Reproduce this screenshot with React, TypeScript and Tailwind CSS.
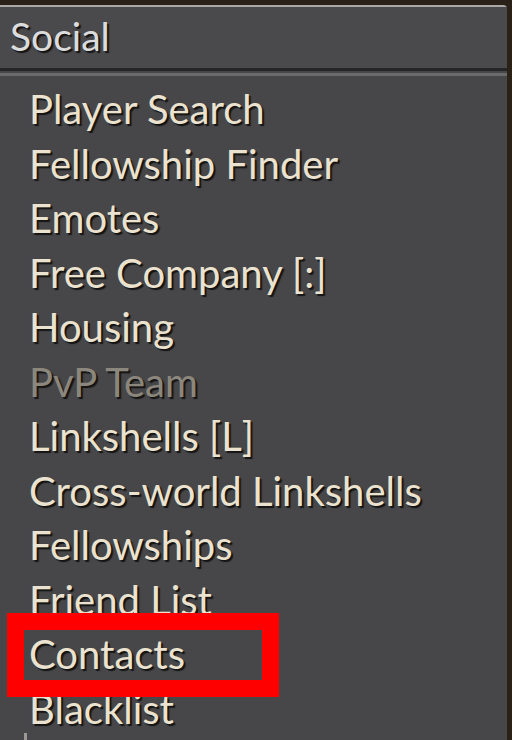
const items: { label: string; disabled?: boolean }[] = [
  { label: "Player Search" },
  { label: "Fellowship Finder" },
  { label: "Emotes" },
  { label: "Free Company [:]" },
  { label: "Housing" },
  { label: "PvP Team", disabled: true },
  { label: "Linkshells [L]" },
  { label: "Cross-world Linkshells" },
  { label: "Fellowships" },
  { label: "Friend List" },
  { label: "Contacts" },
  { label: "Blacklist" },
];

export default function App() {
  return (
    <div className="w-[512px] h-[740px] overflow-hidden bg-[#2a2219] pt-[5px] pr-[5px] font-['Lato','Noto_Sans',sans-serif]">
      <div className="relative h-full rounded-tr-[4px] border-t-2 border-[#a9a8a6] bg-[#474648]">
        {/* header */}
        <div className="h-[61px] bg-[#4a494b] pl-[10px] text-[39px] leading-[59px] text-[#dcdcdc] [text-shadow:2px_2px_1px_#151515]">
          Social
        </div>
        <div className="h-[3px] bg-[#252426]" />
        <div className="h-[2px] bg-[#474648]" />
        <div className="h-[3px] bg-[#6b6a6b]" />

        {/* menu list */}
        <div className="pt-[6px] pl-[29px]">
          {items.map((item) => (
            <div
              key={item.label}
              className={
                "h-[54.5px] text-[40px] leading-[54.5px] whitespace-nowrap [text-shadow:2px_2px_1px_#141414] " +
                (item.disabled ? "text-[#8c877c]" : "text-[#ebe3cf]")
              }
            >
              {item.label}
            </div>
          ))}
        </div>

        {/* highlight around Contacts */}
        <div className="absolute left-[7px] top-[606px] h-[84px] w-[272px] border-[17px] border-[#ff0000]" />

        {/* scrollbar nub */}
        <div className="absolute left-[24px] top-[726px] h-[8px] w-[3px] bg-[#9a9996]" />
      </div>
    </div>
  );
}
